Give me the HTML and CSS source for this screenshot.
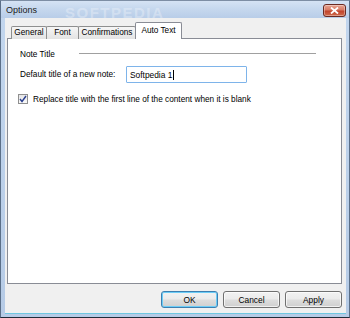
FILE: index.html
```html
<!DOCTYPE html>
<html>
<head>
<meta charset="utf-8">
<link rel="stylesheet" href="styles.css">
</head>
<body>
<div class="window">
  <div class="titlebar">
    <span class="title">Options</span>
    <span class="watermark">SOFTPEDIA</span>
    <button class="close" aria-label="Close">
      <svg width="9" height="7" viewBox="0 0 9 7"><path d="M1 0.5 L8 6.5 M8 0.5 L1 6.5" stroke="#fff" stroke-width="1.8" fill="none"/></svg>
    </button>
  </div>
  <div class="client">
    <div class="tabs">
      <div class="tab t-general">General</div>
      <div class="tab t-font">Font</div>
      <div class="tab t-conf">Confirmations</div>
      <div class="tab active t-auto">Auto Text</div>
    </div>
    <div class="panel">
      <div class="group-head">
        <span class="group-title">Note Title</span>
        <span class="group-line"></span>
      </div>
      <div class="field-row">
        <span class="label">Default title of a new note:</span>
        <div class="input"><span>Softpedia 1</span><span class="caret"></span></div>
      </div>
      <div class="check-row">
        <span class="checkbox">
          <svg width="8" height="8" viewBox="0 0 8 8"><path d="M1 4 L3 6.5 L7 1" stroke="#2a3f8f" stroke-width="1.4" fill="none"/></svg>
        </span>
        <span class="label">Replace title with the first line of the content when it is blank</span>
      </div>
    </div>
    <div class="buttons">
      <button class="btn default">OK</button>
      <button class="btn">Cancel</button>
      <button class="btn">Apply</button>
    </div>
  </div>
</div>
</body>
</html>
```
FILE: styles.css
```css
html, body {
  margin: 0;
  padding: 0;
  background: #f0f0f0;
}
body {
  font-family: "Liberation Sans", Arial, sans-serif;
  font-size: 8.25px;
  color: #000;
}
.window {
  width: 350px;
  height: 318px;
  box-sizing: border-box;
  display: flex;
  flex-direction: column;
  background: linear-gradient(#c2d6ee, #b6cbe6);
  border-left: 1px solid #5b6f88;
  border-right: 1px solid #5b6f88;
  border-top: 1px solid #7d8ea4;
  border-bottom: 1px solid #1f2b38;
}
.titlebar {
  height: 17px;
  flex: none;
  display: flex;
  align-items: center;
  position: relative;
  padding: 0 3px 0 5px;
  background: linear-gradient(#d5e3f4 0%, #c6d8ee 45%, #b8cde8 100%);
}
.title {
  font-size: 9px;
  color: #1b1b1b;
  flex: 1;
  padding-top: 1px;
}
.watermark {
  position: absolute;
  left: 64px;
  top: 3px;
  font-size: 15px;
  letter-spacing: 1.5px;
  color: rgba(255,255,255,0.3);
  font-weight: bold;
}
.close {
  width: 23px;
  height: 13px;
  margin-top: 1px;
  border: 1px solid #6a2a22;
  border-radius: 3px;
  padding: 0;
  display: flex;
  align-items: center;
  justify-content: center;
  background: linear-gradient(#e8a493 0%, #d77a64 45%, #c1432b 55%, #cf6b4c 100%);
  box-shadow: inset 0 0 0 1px rgba(255,255,255,0.35);
}
.client {
  flex: 1;
  display: flex;
  flex-direction: column;
  margin: 0 3px 3px 4px;
  background: #f0f0f0;
  border-bottom: 1px solid #6fc6e0;
  padding: 4px 4px 0 2px;
}
.tabs {
  display: flex;
  align-items: flex-end;
  height: 17px;
  padding-left: 4px;
  position: relative;
  z-index: 1;
  margin-bottom: -1px;
}
.tab {
  box-sizing: border-box;
  height: 13px;
  line-height: 12px;
  text-align: center;
  border: 1px solid #8e8f8f;
  border-bottom: none;
  border-radius: 2px 2px 0 0;
  background: linear-gradient(#f6f6f6, #e4e4e4);
  margin-right: -1px;
  color: #000;
  white-space: nowrap;
}
.tab.active {
  height: 17px;
  line-height: 15px;
  background: #fff;
  border-color: #898c95;
}
.t-general { width: 36px; }
.t-font { width: 33px; }
.t-conf { width: 58px; }
.t-auto { width: 47px; }
.panel {
  flex: 1;
  background: #fff;
  border: 1px solid #898c95;
  padding: 9px 0 0 12px;
}
.group-head {
  display: flex;
  align-items: center;
  height: 12px;
}
.group-title {
  width: 59px;
}
.group-line {
  width: 237px;
  height: 0;
  border-top: 1px solid #a0a0a0;
  border-bottom: 1px solid #fff;
}
.field-row {
  display: flex;
  align-items: center;
  margin-top: 6px;
  height: 17px;
}
.field-row .label {
  width: 106px;
}
.input {
  width: 116px;
  height: 15px;
  border: 1px solid #7eb4ea;
  border-radius: 1px;
  display: flex;
  align-items: center;
  padding-left: 3px;
  font-size: 8.4px;
  background: #fff;
}
.caret {
  width: 1px;
  height: 10px;
  background: #000;
  margin-left: 1px;
}
.check-row {
  display: flex;
  align-items: center;
  margin-top: 10px;
  margin-left: -2px;
  height: 12px;
}
.checkbox {
  width: 8px;
  height: 8px;
  border: 1px solid #8f8f8f;
  background: linear-gradient(#e6e6e6, #fafafa);
  display: flex;
  align-items: center;
  justify-content: center;
  margin-right: 5px;
}
.buttons {
  display: flex;
  justify-content: flex-end;
  gap: 5px;
  padding: 7px 0 0 0;
  box-sizing: border-box;
  flex: none;
  height: 29px;
}
.btn {
  width: 57px;
  height: 17px;
  padding: 0;
  font-family: "Liberation Sans", Arial, sans-serif;
  font-size: 8.4px;
  color: #000;
  border: 1px solid #707070;
  border-radius: 3px;
  background: linear-gradient(#f2f2f2 0%, #ebebeb 48%, #dddddd 52%, #cfcfcf 100%);
  box-shadow: inset 0 0 0 1px rgba(255,255,255,0.7);
}
.btn.default {
  border-color: #3c7fb1;
  box-shadow: inset 0 0 0 1px #6ccdf7;
}
```
